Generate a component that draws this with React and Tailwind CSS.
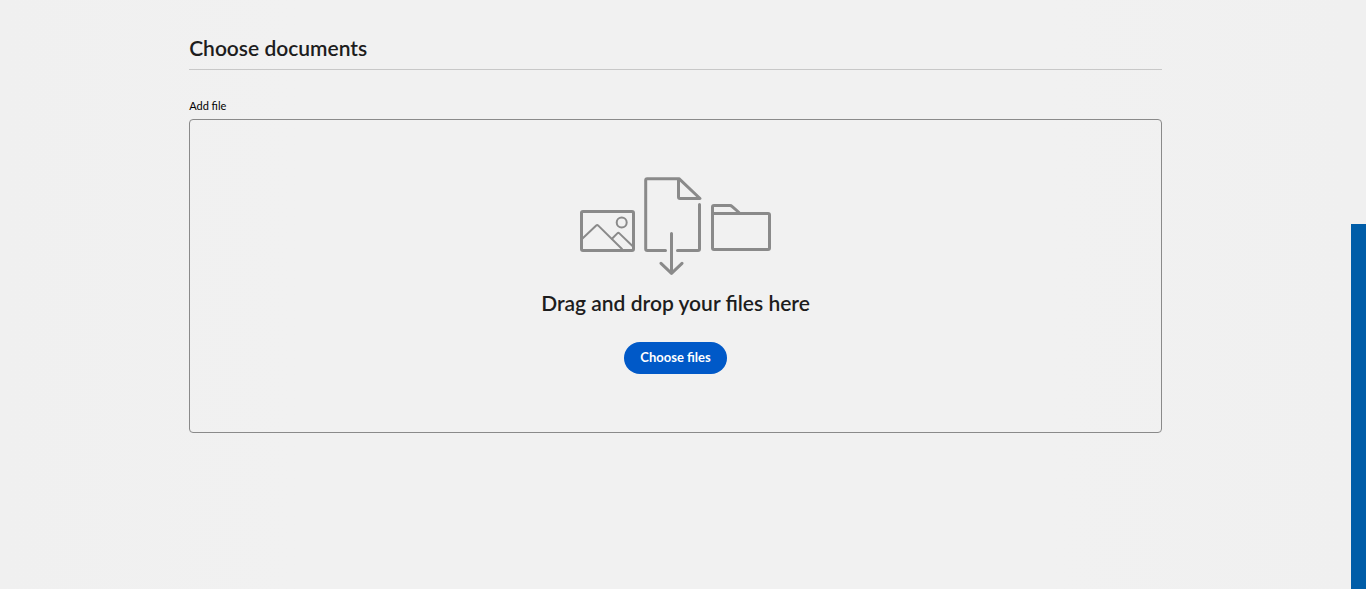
import { useRef, useState } from 'react'

// Line drawing above the prompt: picture, document with arrow, folder
function DropIllustration() {
  return (
    <svg
      className="h-[100px] w-[194px]"
      viewBox="0 0 194 100"
      fill="none"
      stroke="#8a8a8a"
      strokeWidth="3"
      strokeLinecap="round"
      strokeLinejoin="round"
      aria-hidden="true"
    >
      {/* picture */}
      <rect x="2.5" y="35.5" width="52" height="39" rx="1.5" />
      <g strokeWidth="2">
        <circle cx="42.7" cy="46.4" r="5" />
        <path d="M3.5 62.5 17.2 49.6a1.5 1.5 0 0 1 2.1 0L43 73" />
        <path d="M33 62.8 38.3 57.4a1.5 1.5 0 0 1 2.1 0L54 70.5" />
      </g>
      {/* document */}
      <path d="M86.5 74.5H68.2a1.5 1.5 0 0 1-1.5-1.5V4.2a1.5 1.5 0 0 1 1.5-1.5H100l21 19.8h-20a1.5 1.5 0 0 1-1.5-1.5V3" />
      <path d="M120.5 28.5V73a1.5 1.5 0 0 1-1.5 1.5H98.5" />
      <path d="M92.5 57.5v39M82 87.3l10.5 10 10.5-10" />
      {/* folder */}
      <path d="M133.5 37.5V31a1.5 1.5 0 0 1 1.5-1.5h16a3 3 0 0 1 2 .8l7 6.2" />
      <path d="M133.5 37.5H189a1.5 1.5 0 0 1 1.5 1.5v33a1.5 1.5 0 0 1-1.5 1.5h-54a1.5 1.5 0 0 1-1.5-1.5z" />
    </svg>
  )
}

function DropZone() {
  const inputRef = useRef(null)
  const [files, setFiles] = useState([])

  const handleDrop = (e) => {
    e.preventDefault()
    setFiles(Array.from(e.dataTransfer.files))
  }

  return (
    <div
      className="flex flex-col items-center rounded border border-[#8a8a8a] px-4 pt-14 pb-[58px]"
      onDragOver={(e) => e.preventDefault()}
      onDrop={handleDrop}
    >
      <DropIllustration />
      <h3 className="mt-[11px] text-[21px] leading-8 font-semibold">Drag and drop your files here</h3>
      <button
        type="button"
        className="mt-[23px] h-8 rounded-full bg-[#0059c8] px-4 text-[13px] font-bold text-white hover:bg-[#004cab]"
        onClick={() => inputRef.current?.click()}
      >
        Choose files
      </button>
      <input
        id="add-file"
        ref={inputRef}
        type="file"
        multiple
        className="hidden"
        onChange={(e) => setFiles(Array.from(e.target.files))}
      />
      {files.length > 0 && (
        <ul className="mt-4 text-sm">
          {files.map((f) => (
            <li key={f.name}>{f.name}</li>
          ))}
        </ul>
      )}
    </div>
  )
}

export default function App() {
  return (
    <div className="flex min-h-screen bg-[#f0f0f0] font-['Lato','Open_Sans',sans-serif] text-[#1d1d1d]">
      <main className="min-w-0 flex-1 bg-[linear-gradient(to_right,#f0f0f0,#f1f1f1_22%,#f1f1f1_78%,#f0f0f0)] pt-8">
        <section className="mx-auto w-[72%]">
          <h2 className="border-b border-[#c8c8c8] pb-[5px] text-[21px] leading-8 font-semibold">
            Choose documents
          </h2>
          <label htmlFor="add-file" className="mt-7 mb-[5px] block text-[11px] leading-4 text-black">
            Add file
          </label>
          <DropZone />
        </section>
      </main>
      <aside className="mt-56 w-[15px] shrink-0 bg-[#005da8]" />
    </div>
  )
}
